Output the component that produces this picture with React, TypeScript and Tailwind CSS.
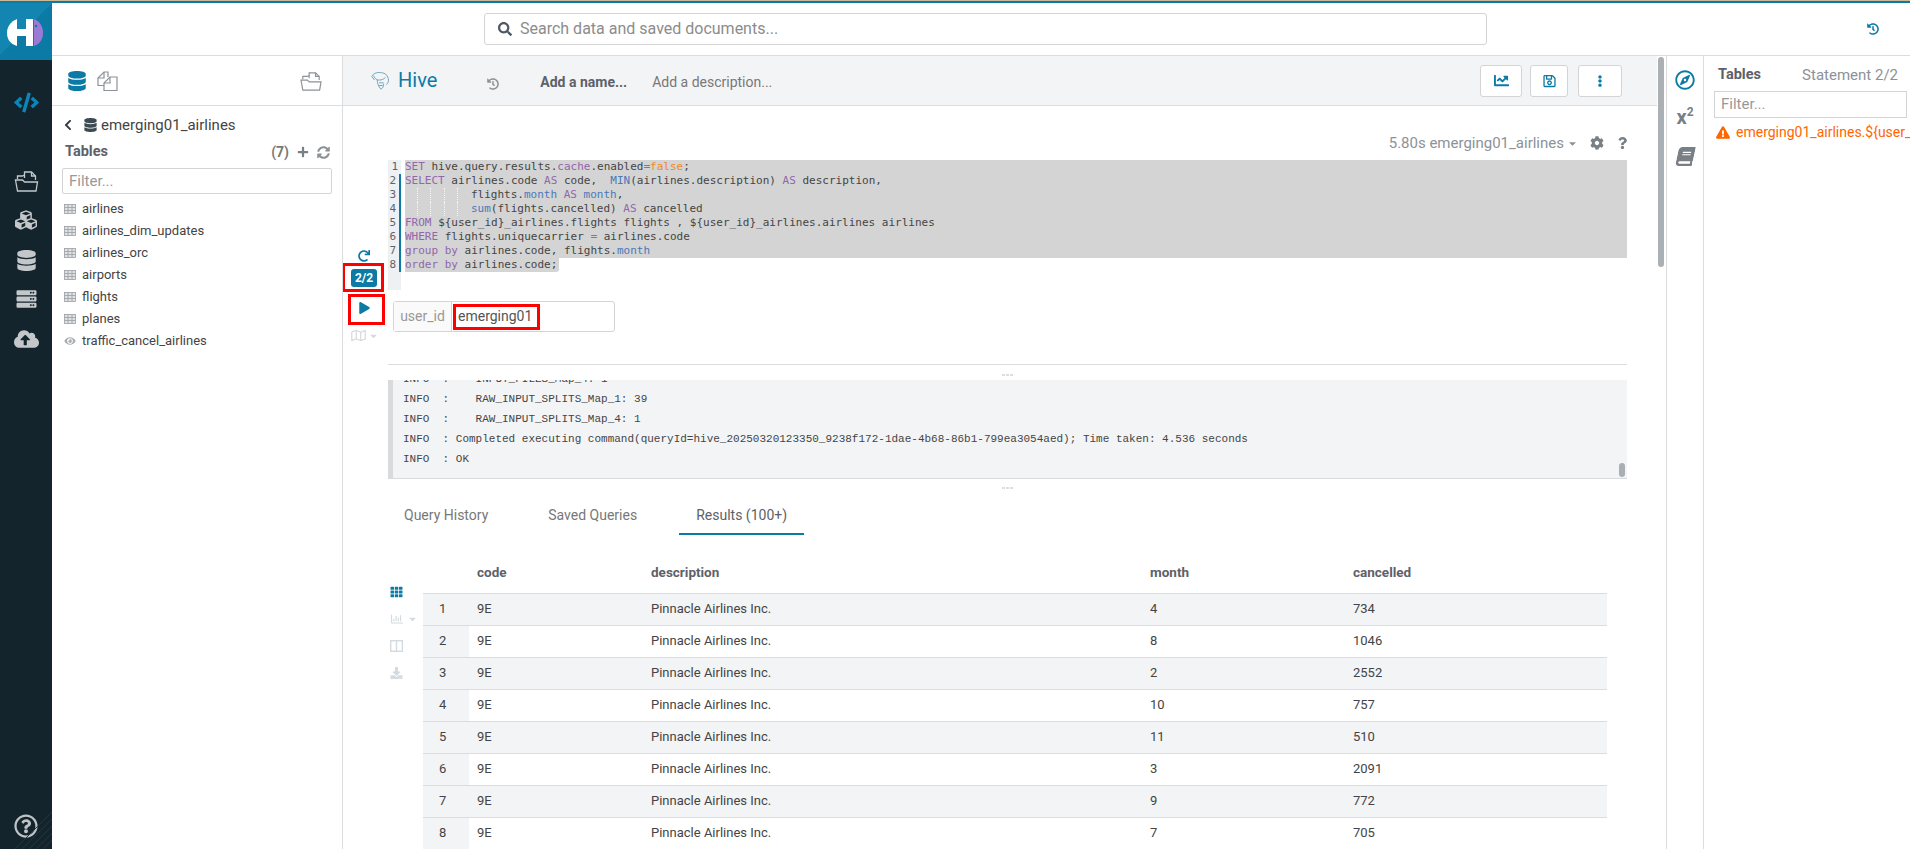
import type { ReactNode } from "react"
import {
  FaBook,
  FaCaretDown,
  FaChartLine,
  FaChevronLeft,
  FaCloudUploadAlt,
  FaCode,
  FaCog,
  FaCubes,
  FaDatabase,
  FaDownload,
  FaEllipsisV,
  FaExclamationTriangle,
  FaEye,
  FaHistory,
  FaPlay,
  FaPlus,
  FaQuestion,
  FaRedo,
  FaRegChartBar,
  FaRegCompass,
  FaRegMap,
  FaRegQuestionCircle,
  FaRegSave,
  FaSearch,
  FaServer,
  FaSyncAlt,
  FaTh,
} from "react-icons/fa"

const tables = [
  { name: "airlines" },
  { name: "airlines_dim_updates" },
  { name: "airlines_orc" },
  { name: "airports" },
  { name: "flights" },
  { name: "planes" },
  { name: "traffic_cancel_airlines", view: true },
]

const rows = [
  ["1", "4", "734"],
  ["2", "8", "1046"],
  ["3", "2", "2552"],
  ["4", "10", "757"],
  ["5", "11", "510"],
  ["6", "3", "2091"],
  ["7", "9", "772"],
  ["8", "7", "705"],
]

function Logo() {
  return (
    <svg viewBox="0 0 52 57" className="h-[57px] w-[52px] shrink-0">
      <rect width="52" height="57" fill="#0b7ba6" />
      <polygon points="0,0 52,0 0,52" fill="#1285b0" />
      <path d="M17 16C10 19 7 24 7 30C7 36 10 41 17 43Z" fill="#fff" />
      <rect x="16" y="26" width="11" height="7" fill="#fff" />
      <rect x="26" y="16" width="7" height="27" fill="#fff" />
      <path d="M34 16C40 18 43 24 43 30C43 36 40 41 34 43Z" fill="#9b7ad6" />
      <circle cx="36" cy="23" r="1.2" fill="#0b7ba6" />
    </svg>
  )
}

function FolderDoc({ className }: { className?: string }) {
  return (
    <svg viewBox="0 0 24 22" fill="none" stroke="currentColor" strokeWidth="1.3" className={className}>
      <path d="M3 9V6h5l2-1" />
      <path d="M10 8V2h7l4 4v4" />
      <path d="M17 2v4h4" />
      <path d="M1 10h7l2 2h13l-1.5 9H3Z" />
    </svg>
  )
}

function FilesIcon({ className }: { className?: string }) {
  return (
    <svg viewBox="0 0 21 20" fill="none" stroke="currentColor" strokeWidth="1.2" className={className}>
      <path d="M7 14.5H1V7l6-6h4v5" />
      <path d="M7 1v6H1" />
      <path d="M7 19.5V12l6-6h7v13.5Z" />
      <path d="M13 6v6H7" />
    </svg>
  )
}

function HiveIcon() {
  return (
    <svg viewBox="0 0 22 22" fill="none" stroke="#3d8fb0" strokeWidth="0.8" className="h-5 w-5">
      <path d="M2 6c2-4 7-5 11-4c3 0 6 2 7 6c1 3 0 5-2 7" />
      <path d="M4 5c1 3 3 5 6 5c3 0 5-1 7-3" />
      <path d="M8 10c0 3 1 7 4 10c2-1 3-3 3-6" />
      <path d="M10 13h5M10 16h4M2 6l3 4" />
    </svg>
  )
}

function TableIcon() {
  return (
    <svg viewBox="0 0 12 10" className="h-[10px] w-3 shrink-0" fill="#dfe1e3" stroke="#9a9ea3" strokeWidth="0.8">
      <rect x="0.5" y="0.5" width="11" height="9" />
      <path d="M0.5 3.5h11M0.5 6.5h11M4 0.5v9M8 0.5v9" fill="none" />
    </svg>
  )
}

function NavRail() {
  return (
    <aside className="relative flex w-[52px] shrink-0 flex-col items-center bg-[#14242c]">
      <Logo />
      <FaCode className="mt-[30px] h-[25px] w-[25px] text-[#0b86b8]" />
      <FolderDoc className="mt-[55px] h-[22px] w-[25px] text-[#c3c7ca]" />
      <FaCubes className="mt-[17px] h-[22px] w-[26px] text-[#c3c7ca]" />
      <FaDatabase className="mt-[19px] h-[21px] w-[19px] text-[#c3c7ca]" />
      <FaServer className="mt-[18px] h-[20px] w-[21px] text-[#c3c7ca]" />
      <FaCloudUploadAlt className="mt-[18px] h-[24px] w-[25px] text-[#c3c7ca]" />
      <FaRegQuestionCircle className="relative mt-auto mb-[11px] h-[24px] w-[24px] text-[#bfc3c6]" />
      <svg viewBox="0 0 37 37" stroke="#24343c" strokeWidth="1" className="absolute right-0 bottom-0 h-[37px] w-[37px]">
        <path d="M0 37L37 0M7 37L37 7M14 37L37 14M21 37L37 21M28 37L37 28" />
      </svg>
    </aside>
  )
}

function TopBar() {
  return (
    <header className="flex h-[53px] shrink-0 items-center border-b border-[#dcdcdc] bg-white">
      <div className="ml-[432px] flex h-[32px] w-[1003px] items-center rounded-[3px] border border-[#d4d4d4] px-[13px]">
        <FaSearch className="h-[14px] w-[14px] text-[#4d5a66]" />
        <span className="ml-2 text-[16px] text-[#8c8c8c]">Search data and saved documents...</span>
      </div>
      <FaHistory className="ml-[380px] h-[12px] w-[12px] text-[#0b7ba6]" />
    </header>
  )
}

function LeftAssist() {
  return (
    <section className="flex w-[291px] shrink-0 flex-col border-r border-[#dcdcdc]">
      <div className="flex h-[50px] shrink-0 items-center border-b border-[#dcdcdc] pr-[20px] pl-[16px] text-[#8c9298]">
        <FaDatabase className="h-[20px] w-[18px] text-[#0b7ba6]" />
        <FilesIcon className="ml-[11px] h-[20px] w-[21px]" />
        <FolderDoc className="ml-auto h-[20px] w-[22px]" />
      </div>
      <div className="box-content flex h-[24px] shrink-0 items-center pt-[7px] pl-[11px] text-[15px] text-[#444]">
        <FaChevronLeft className="h-[12px] w-[10px] text-[#333c44]" />
        <FaDatabase className="ml-[11px] h-[14px] w-[13px] text-[#3e4a52]" />
        <span className="ml-[4px]">emerging01_airlines</span>
      </div>
      <div className="box-content flex h-[22px] shrink-0 items-center pt-[4px] pr-[12px] pl-[13px] text-[#5d6169]">
        <span className="text-[14.5px] font-bold">Tables</span>
        <span className="ml-auto text-[14px] font-bold text-[#787878]">(7)</span>
        <FaPlus className="ml-[8px] h-[12px] w-[12px] text-[#787f85]" />
        <FaSyncAlt className="ml-[8px] h-[13px] w-[13px] text-[#8c9298]" />
      </div>
      <div className="mx-[10px] mt-[5px] flex h-[26px] items-center rounded-[2px] border border-[#d4d4d4] px-[6px] text-[15px] text-[#999]">
        Filter...
      </div>
      <ul className="mt-[4px] pl-[12px] text-[13px] text-[#444]">
        {tables.map((table) => (
          <li key={table.name} className="flex h-[22px] items-center">
            {table.view ? <FaEye className="h-[10px] w-3 shrink-0 text-[#a9adb1]" /> : <TableIcon />}
            <span className="ml-[6px]">{table.name}</span>
          </li>
        ))}
      </ul>
    </section>
  )
}

function CodeLine({ n, edge, full = true, children }: { n: number; edge: boolean; full?: boolean; children: ReactNode }) {
  return (
    <div className="flex h-[14px]">
      <div className={`w-[13px] shrink-0 bg-[#eef1f4] pr-[3px] text-right text-[#5f6368] ${edge ? "border-r-2 border-[#0b7ba6]" : ""}`}>{n}</div>
      <div className={`ml-[4px] whitespace-pre text-[#444] ${full ? "flex-1" : ""}`}>
        <div className={`h-[14px] bg-[#d4d4d4] ${full ? "" : "w-fit rounded-br-[3px] pr-[2px]"}`}>{children}</div>
      </div>
    </div>
  )
}

function Indent() {
  return (
    <>
      <span className="inline-block h-[14px] w-[13.2px] border-r border-dotted border-[#f4f4f4] align-top" />
      <span className="inline-block h-[14px] w-[13.2px] border-r border-dotted border-[#f4f4f4] align-top" />
      <span className="inline-block h-[14px] w-[13.2px] border-r border-dotted border-[#f4f4f4] align-top" />
      <span className="inline-block h-[14px] w-[13.2px] border-r border-dotted border-[#f4f4f4] align-top" />
      <span className="inline-block h-[14px] w-[13.2px] align-top" />
    </>
  )
}

const Kw = ({ children }: { children: ReactNode }) => <span className="text-[#9166ab]">{children}</span>
const Fn = ({ children }: { children: ReactNode }) => <span className="text-[#4a78b8]">{children}</span>

function Editor() {
  return (
    <div className="font-['DejaVu_Sans_Mono',monospace] text-[11px] leading-[14px]">
      <CodeLine n={1} edge={false}>
        <Kw>SET</Kw> hive.query.results.<Kw>cache</Kw>.enabled<span className="text-[#2a9bb5]">=</span>
        <span className="text-[#f08a24]">false</span>;
      </CodeLine>
      <CodeLine n={2} edge>
        <Kw>SELECT</Kw> airlines.code <Kw>AS</Kw> code,  <Fn>MIN</Fn>(airlines.description) <Kw>AS</Kw> description,
      </CodeLine>
      <CodeLine n={3} edge>
        <Indent />flights.<Fn>month</Fn> <Kw>AS</Kw> <Fn>month</Fn>,
      </CodeLine>
      <CodeLine n={4} edge>
        <Indent /><Fn>sum</Fn>(flights.cancelled) <Kw>AS</Kw> cancelled
      </CodeLine>
      <CodeLine n={5} edge>
        <Kw>FROM</Kw> {"${user_id}"}_airlines.flights flights , {"${user_id}"}_airlines.airlines airlines
      </CodeLine>
      <CodeLine n={6} edge>
        <Kw>WHERE</Kw> flights.uniquecarrier <span className="text-[#2a9bb5]">=</span> airlines.code
      </CodeLine>
      <CodeLine n={7} edge>
        <Kw>group by</Kw> airlines.code, flights.<Fn>month</Fn>
      </CodeLine>
      <CodeLine n={8} edge full={false}>
        <Kw>order by</Kw> airlines.code;
      </CodeLine>
      <div className="h-[18px] w-[13px] bg-[#eef1f4]" />
    </div>
  )
}

function RunControls() {
  return (
    <div className="flex w-[45px] shrink-0 flex-col items-center pt-[90px] pr-[3px]">
      <FaRedo className="h-[12px] w-[12px] text-[#0b7ba6]" />
      <div className="relative mt-[7px]">
        <div className="flex h-[18px] w-[26px] items-center justify-center rounded-[3px] bg-[#0b7ba6] text-[12px] font-bold text-white">2/2</div>
        <div className="absolute -top-[6px] -right-[7px] -bottom-[5px] -left-[9px] border-[3px] border-[#f00]" />
      </div>
      <div className="relative mt-[15px]">
        <FaPlay className="h-[12px] w-[11px] text-[#0b7ba6]" />
        <div className="absolute -top-[8px] -right-[15px] -bottom-[11px] -left-[11px] border-[3px] border-[#f00]" />
      </div>
      <div className="mt-[15px] flex items-center gap-[3px] text-[#d6dadd]">
        <FaRegMap className="h-[13px] w-[15px]" />
        <FaCaretDown className="h-[10px] w-[9px]" />
      </div>
    </div>
  )
}

function Handle({ className }: { className: string }) {
  return (
    <div className={`flex items-center justify-center gap-[1px] ${className}`}>
      <span className="h-[2px] w-[3px] bg-[#dedede]" />
      <span className="h-[2px] w-[3px] bg-[#dedede]" />
      <span className="h-[2px] w-[3px] bg-[#dedede]" />
    </div>
  )
}

function LogPanel() {
  return (
    <div className="relative flex h-[99px] flex-col justify-end overflow-hidden border-b border-l-[5px] border-[#d8dadc] bg-[#f3f4f6] pb-[9px] pl-[10px] font-['Liberation_Mono',monospace] text-[11px] leading-[20px] whitespace-pre text-[#444]">
      <div className="shrink-0">{"INFO  :    INPUT_FILES_Map_4: 1"}</div>
      <div className="shrink-0">{"INFO  :    RAW_INPUT_SPLITS_Map_1: 39"}</div>
      <div className="shrink-0">{"INFO  :    RAW_INPUT_SPLITS_Map_4: 1"}</div>
      <div className="shrink-0">{"INFO  : Completed executing command(queryId=hive_20250320123350_9238f172-1dae-4b68-86b1-799ea3054aed); Time taken: 4.536 seconds"}</div>
      <div className="shrink-0">{"INFO  : OK"}</div>
      <div className="absolute right-[2px] bottom-[1px] h-[14px] w-[6px] rounded-full bg-[#a9afb4]" />
    </div>
  )
}

function ResultTabs() {
  return (
    <div className="flex h-[36px] text-[14px] text-[#787878]">
      <div className="flex items-center px-[16px] pb-[3px]">Query History</div>
      <div className="ml-[27px] flex items-center px-[17px] pb-[3px]">Saved Queries</div>
      <div className="ml-[25px] flex items-center border-b-2 border-[#0b7ba6] px-[17px] pb-[1px] text-[#5d6169]">Results (100+)</div>
    </div>
  )
}

function ResultTable() {
  return (
    <div className="mt-[14px] flex">
      <div className="flex w-[35px] shrink-0 flex-col pt-[37px] pl-[2px] text-[#d4dade]">
        <FaTh className="h-[12px] w-[13px] text-[#0b7ba6]" />
        <div className="mt-[15px] flex items-center gap-[4px]">
          <FaRegChartBar className="h-[12px] w-[14px]" />
          <FaCaretDown className="h-[10px] w-[9px]" />
        </div>
        <svg viewBox="0 0 13 12" fill="none" stroke="currentColor" strokeWidth="1.4" className="mt-[15px] h-[12px] w-[13px]">
          <rect x="0.7" y="0.7" width="11.6" height="10.6" />
          <path d="M6.5 0.7v10.6" />
        </svg>
        <FaDownload className="mt-[15px] h-[12px] w-[13px]" />
      </div>
      <table className="w-[1184px] table-fixed border-collapse text-left text-[13px] text-[#444]">
        <colgroup>
          <col className="w-[46px]" />
          <col className="w-[174px]" />
          <col className="w-[499px]" />
          <col className="w-[203px]" />
          <col />
        </colgroup>
        <thead>
          <tr className="h-[44px] border-b border-[#dcdcdc] text-[13.5px] text-[#5d6169]">
            <th />
            <th className="pt-[2px] pl-[8px] font-bold">code</th>
            <th className="pt-[2px] pl-[8px] font-bold">description</th>
            <th className="pt-[2px] pl-[8px] font-bold">month</th>
            <th className="pt-[2px] pl-[8px] font-bold">cancelled</th>
          </tr>
        </thead>
        <tbody>
          {rows.map(([n, month, cancelled], i) => (
            <tr key={n} className={`h-[32px] border-b border-[#dcdcdc] ${i % 2 === 0 ? "bg-[#f3f4f6]" : "bg-white"}`}>
              <td className="bg-[#f3f4f6] pl-[16px]">{n}</td>
              <td className="pl-[8px]">9E</td>
              <td className="pl-[8px]">Pinnacle Airlines Inc.</td>
              <td className="pl-[8px]">{month}</td>
              <td className="pl-[8px]">{cancelled}</td>
            </tr>
          ))}
        </tbody>
      </table>
    </div>
  )
}

function MainPanel() {
  return (
    <main className="relative w-[1323px] shrink-0 overflow-hidden">
      <div className="mr-[9px] flex h-[50px] items-center border-b border-[#dcdcdc] bg-[#f3f4f6] pr-[35px] pl-[27px]">
        <HiveIcon />
        <span className="mb-[2px] ml-[8px] text-[20px] text-[#0b7ba6]">Hive</span>
        <FaHistory className="mt-[6px] ml-[50px] h-[12px] w-[12px] text-[#8c9298]" />
        <span className="mt-[4px] ml-[41px] text-[14px] font-bold text-[#5d6169]">Add a name...</span>
        <span className="mt-[4px] ml-[25px] text-[14px] text-[#787878]">Add a description...</span>
        <div className="ml-auto flex items-center text-[#0b7ba6]">
          <div className="flex h-[32px] w-[42px] items-center justify-center rounded-[3px] border border-[#d4d4d4] bg-white">
            <FaChartLine className="h-[15px] w-[17px]" />
          </div>
          <div className="ml-[8px] flex h-[32px] w-[38px] items-center justify-center rounded-[3px] border border-[#d4d4d4] bg-white">
            <FaRegSave className="h-[14px] w-[13px]" />
          </div>
          <div className="ml-[10px] flex h-[32px] w-[44px] items-center justify-center rounded-[3px] border border-[#d4d4d4] bg-white">
            <FaEllipsisV className="h-[12px] w-[12px]" />
          </div>
        </div>
      </div>

      <div className="flex h-[54px] items-end justify-end pr-[39px] pb-[7px] text-[15px] text-[#8c9298]">
        <div className="flex h-[20px] items-center">
          <span>5.80s emerging01_airlines</span>
          <FaCaretDown className="ml-[4px] h-[11px] w-[9px]" />
          <FaCog className="ml-[13px] h-[14px] w-[14px] text-[#787f85]" />
          <FaQuestion className="ml-[14px] h-[12px] w-[9px] text-[#787f85]" />
        </div>
      </div>

      <div className="flex h-[204px]">
        <RunControls />
        <div className="mr-[39px] min-w-0 flex-1">
          <Editor />
          <div className="mt-[11px] ml-[5px] flex h-[31px] w-[222px] rounded-[3px] border border-[#d4d4d4] text-[14px]">
            <div className="flex w-[58px] items-center justify-center border-r border-[#d4d4d4] bg-[#fafafa] text-[#999]">user_id</div>
            <div className="relative flex flex-1 items-center pl-[6px] text-[#555]">
              emerging01
              <div className="absolute top-[2px] bottom-[1px] left-[1px] w-[87px] border-[3px] border-[#f00]" />
            </div>
          </div>
        </div>
      </div>

      <div className="mr-[39px] ml-[45px]">
        <div className="h-px bg-[#dcdcdc]" />
        <Handle className="h-[15px] pt-[4px]" />
        <LogPanel />
        <Handle className="h-[20px] pb-[2px]" />
        <ResultTabs />
        <ResultTable />
      </div>

      <div className="absolute top-px right-[2px] h-[210px] w-[6px] rounded-full bg-[#aab0b4]" />
    </main>
  )
}

function RightAssist() {
  return (
    <>
      <div className="flex w-[38px] shrink-0 flex-col items-center border-x border-[#dcdcdc] pt-[14px] text-[#787f85]">
        <FaRegCompass className="h-[20px] w-[20px] text-[#0b7ba6]" />
        <div className="mt-[14px] flex h-[24px] items-start text-[20px] leading-[26px] font-bold">
          x<span className="text-[12px] leading-[16px]">2</span>
        </div>
        <FaBook className="mt-[19px] h-[19px] w-[17px] -skew-x-12" />
      </div>
      <aside className="min-w-0 flex-1 overflow-hidden pl-[10px]">
        <div className="flex h-[35px] items-center pt-[3px] pr-[12px] pl-[4px]">
          <span className="text-[14.5px] font-bold text-[#5d6169]">Tables</span>
          <span className="ml-auto text-[15px] text-[#8c9298]">Statement 2/2</span>
        </div>
        <div className="flex h-[27px] w-[193px] items-center border border-[#d4d4d4] px-[6px] text-[15px] text-[#999]">
          Filter...
        </div>
        <div className="mt-[3px] flex h-[22px] items-center whitespace-nowrap text-[14px] text-[#ff6600]">
          <FaExclamationTriangle className="mr-[6px] ml-[2px] h-[13px] w-[14px] shrink-0" />
          {"emerging01_airlines.${user_id}_airlines.flights"}
        </div>
      </aside>
    </>
  )
}

export default function App() {
  return (
    <div className="flex h-[849px] w-[1910px] flex-col overflow-hidden bg-white font-[Roboto,sans-serif]">
      <div className="h-[3px] shrink-0 border-t border-[#c9b89a] bg-[#0b7ba6]" />
      <div className="flex min-h-0 flex-1">
        <NavRail />
        <div className="flex min-w-0 flex-1 flex-col">
          <TopBar />
          <div className="flex min-h-0 flex-1">
            <LeftAssist />
            <MainPanel />
            <RightAssist />
          </div>
        </div>
      </div>
    </div>
  )
}
